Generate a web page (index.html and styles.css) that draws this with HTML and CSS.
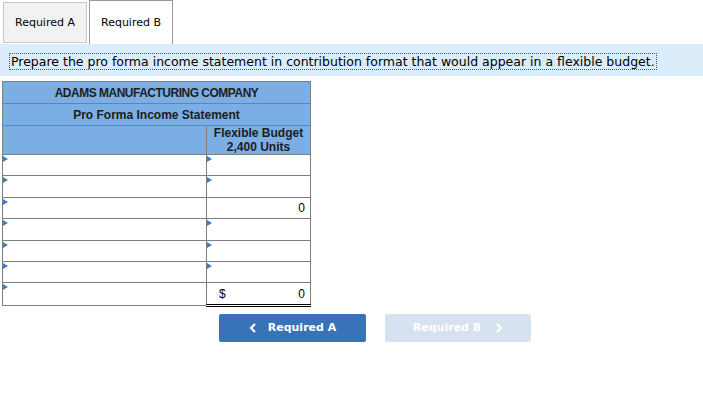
FILE: index.html
```html
<!DOCTYPE html>
<html>
<head>
<meta charset="utf-8">
<link rel="stylesheet" href="styles.css">
</head>
<body>
<div class="tabs">
  <div class="tab tab-inactive">Required A</div>
  <div class="tab tab-active">Required B</div>
</div>
<div class="instr">
  <span class="instr-text">Prepare the pro forma income statement in contribution format that would appear in a flexible budget.</span>
</div>
<table class="stmt">
  <colgroup><col class="c1"><col class="c2"></colgroup>
  <tr class="h1"><th colspan="2">ADAMS MANUFACTURING COMPANY</th></tr>
  <tr class="h2"><th colspan="2">Pro Forma Income Statement</th></tr>
  <tr class="h3"><th></th><th>Flexible Budget<br>2,400 Units</th></tr>
  <tr><td><span class="mk"></span></td><td><span class="mk"></span></td></tr>
  <tr><td><span class="mk"></span></td><td><span class="mk"></span></td></tr>
  <tr><td><span class="mk"></span></td><td class="total">0</td></tr>
  <tr><td><span class="mk"></span></td><td><span class="mk"></span></td></tr>
  <tr><td><span class="mk"></span></td><td><span class="mk"></span></td></tr>
  <tr><td><span class="mk"></span></td><td><span class="mk"></span></td></tr>
  <tr><td><span class="mk"></span></td><td class="total final"><span class="dollar">$</span>0</td></tr>
</table>
<div class="nav">
  <div class="btn btn-prev"><svg class="chev" width="8" height="10" viewBox="0 0 8 10"><path d="M6 1 L2 5 L6 9" fill="none" stroke="#fff" stroke-width="2.2"/></svg>Required A</div>
  <div class="btn btn-next">Required B<svg class="chev chev-r" width="8" height="10" viewBox="0 0 8 10"><path d="M2 1 L6 5 L2 9" fill="none" stroke="#fff" stroke-width="2.2"/></svg></div>
</div>
</body>
</html>
```
FILE: styles.css
```css
html, body {
  margin: 0;
  padding: 0;
  background: #fff;
}
body {
  font-family: "DejaVu Sans", Verdana, sans-serif;
  color: #000;
}
.tabs {
  display: flex;
  align-items: flex-end;
  gap: 2px;
  height: 44px;
  padding-left: 3px;
}
.tab {
  box-sizing: border-box;
  width: 84px;
  display: flex;
  align-items: center;
  justify-content: center;
  font-size: 11px;
}
.tab-inactive {
  height: 41px;
  margin-bottom: 1px;
  background: #f2f2f2;
  border: 1px solid #c8c8c8;
}
.tab-active {
  height: 44px;
  background: #fff;
  border: 1px solid #999;
  border-bottom: none;
}
.instr {
  background: #dbecfa;
  height: 32px;
  padding: 7px 0 0 9px;
  box-sizing: border-box;
}
.instr-text {
  font-size: 12.5px;
  border: 1px dotted #2a5d99;
  padding: 0 1px;
  line-height: 15px;
  display: inline-block;
}
.stmt {
  border-collapse: collapse;
  table-layout: fixed;
  width: 308px;
  margin: 5px 0 0 2px;
  font-family: "Liberation Sans", Arial, sans-serif;
  font-size: 12px;
}
.c1 { width: 204px; }
.c2 { width: 104px; }
.stmt th, .stmt td {
  border: 1px solid #7f7f7f;
  padding: 0;
}
.stmt th {
  background: #7aaee5;
  color: #1d1d1d;
  font-weight: bold;
  text-align: center;
}
.h1 th { letter-spacing: -0.5px; }
.h1 th, .h2 th { height: 21px; }
.h3 th { height: 28px; line-height: 14px; }
.stmt td { height: 20.4px; vertical-align: top; position: relative; }
.mk {
  position: absolute;
  left: 0;
  top: 1px;
  width: 0;
  height: 0;
  border-top: 3px solid transparent;
  border-bottom: 3px solid transparent;
  border-left: 5px solid #3d7cc9;
}
.stmt td.total {
  border-top: 1px solid #000;
  text-align: right;
  vertical-align: middle;
  padding-right: 5px;
}
.stmt td.final {
  border-bottom: 3px double #000;
}
.dollar {
  float: left;
  padding-left: 12px;
}
.nav {
  display: flex;
  gap: 19px;
  margin: 7px 0 0 219px;
}
.btn {
  box-sizing: border-box;
  width: 147px;
  height: 28px;
  border-radius: 2px;
  display: flex;
  align-items: center;
  justify-content: center;
  color: #fff;
  font-weight: bold;
  font-size: 11px;
}
.btn-prev { background: #3873ba; }
.btn-next { background: #d6e2f0; width: 146px; }
.chev { margin-right: 11px; }
.chev-r { margin: 0 0 0 14px; }
```
